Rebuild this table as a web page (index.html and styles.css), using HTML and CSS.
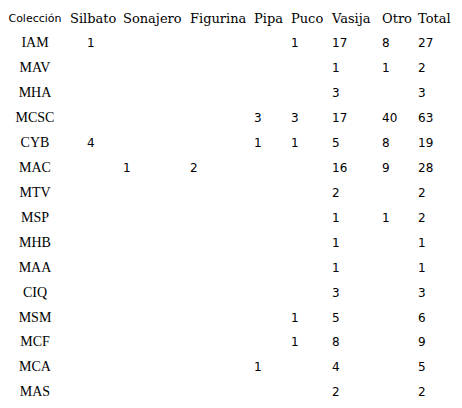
FILE: index.html
```html
<!DOCTYPE html>
<html lang="es">
<head>
<meta charset="utf-8">
<title>Colecciones</title>
<link rel="stylesheet" href="styles.css">
</head>
<body>
<table class="tabla">
  <colgroup>
    <col class="c-col">
    <col class="c-silbato">
    <col class="c-sonajero">
    <col class="c-figurina">
    <col class="c-pipa">
    <col class="c-puco">
    <col class="c-vasija">
    <col class="c-otro">
    <col class="c-total">
  </colgroup>
  <thead>
    <tr>
      <th class="h-col">Colección</th>
      <th class="h-first">Silbato</th>
      <th>Sonajero</th>
      <th>Figurina</th>
      <th>Pipa</th>
      <th>Puco</th>
      <th>Vasija</th>
      <th>Otro</th>
      <th>Total</th>
    </tr>
  </thead>
  <tbody>
    <tr><td class="code">IAM</td><td class="first">1</td><td></td><td></td><td></td><td>1</td><td>17</td><td>8</td><td>27</td></tr>
    <tr><td class="code">MAV</td><td class="first"></td><td></td><td></td><td></td><td></td><td>1</td><td>1</td><td>2</td></tr>
    <tr><td class="code">MHA</td><td class="first"></td><td></td><td></td><td></td><td></td><td>3</td><td></td><td>3</td></tr>
    <tr><td class="code">MCSC</td><td class="first"></td><td></td><td></td><td>3</td><td>3</td><td>17</td><td>40</td><td>63</td></tr>
    <tr><td class="code">CYB</td><td class="first">4</td><td></td><td></td><td>1</td><td>1</td><td>5</td><td>8</td><td>19</td></tr>
    <tr><td class="code">MAC</td><td class="first"></td><td>1</td><td>2</td><td></td><td></td><td>16</td><td>9</td><td>28</td></tr>
    <tr><td class="code">MTV</td><td class="first"></td><td></td><td></td><td></td><td></td><td>2</td><td></td><td>2</td></tr>
    <tr><td class="code">MSP</td><td class="first"></td><td></td><td></td><td></td><td></td><td>1</td><td>1</td><td>2</td></tr>
    <tr><td class="code">MHB</td><td class="first"></td><td></td><td></td><td></td><td></td><td>1</td><td></td><td>1</td></tr>
    <tr><td class="code">MAA</td><td class="first"></td><td></td><td></td><td></td><td></td><td>1</td><td></td><td>1</td></tr>
    <tr><td class="code">CIQ</td><td class="first"></td><td></td><td></td><td></td><td></td><td>3</td><td></td><td>3</td></tr>
    <tr><td class="code">MSM</td><td class="first"></td><td></td><td></td><td></td><td>1</td><td>5</td><td></td><td>6</td></tr>
    <tr><td class="code">MCF</td><td class="first"></td><td></td><td></td><td></td><td>1</td><td>8</td><td></td><td>9</td></tr>
    <tr><td class="code">MCA</td><td class="first"></td><td></td><td></td><td>1</td><td></td><td>4</td><td></td><td>5</td></tr>
    <tr><td class="code">MAS</td><td class="first"></td><td></td><td></td><td></td><td></td><td>2</td><td></td><td>2</td></tr>
  </tbody>
</table>
</body>
</html>
```

FILE: styles.css
```css
html, body {
  margin: 0;
  padding: 0;
  background: #ffffff;
  color: #000000;
}

body {
  padding: 6px 0 0 4px;
}

.tabla {
  table-layout: fixed;
  border-collapse: collapse;
  border-spacing: 0;
  width: 458px;
}

.c-col { width: 62px; }
.c-silbato { width: 55px; }
.c-sonajero { width: 67px; }
.c-figurina { width: 64px; }
.c-pipa { width: 37px; }
.c-puco { width: 41px; }
.c-vasija { width: 50px; }
.c-otro { width: 36px; }
.c-total { width: 46px; }

.tabla tr {
  height: 24.93px;
}

.tabla th,
.tabla td {
  padding: 0 0 0 2px;
  vertical-align: middle;
  text-align: left;
  white-space: nowrap;
}

.tabla th {
  font-family: "DejaVu Serif", serif;
  font-size: 13px;
  font-weight: normal;
}

.tabla th.h-col {
  font-family: "DejaVu Sans", sans-serif;
  font-size: 11px;
  text-align: center;
  padding: 0;
}

.tabla th.h-first {
  padding-left: 4px;
}

.tabla td {
  font-family: "DejaVu Sans", sans-serif;
  font-size: 12px;
}

.tabla td.code {
  font-family: "Liberation Serif", serif;
  font-size: 14px;
  text-align: center;
  padding: 0;
}

.tabla td.first {
  padding-left: 21px;
}
```
